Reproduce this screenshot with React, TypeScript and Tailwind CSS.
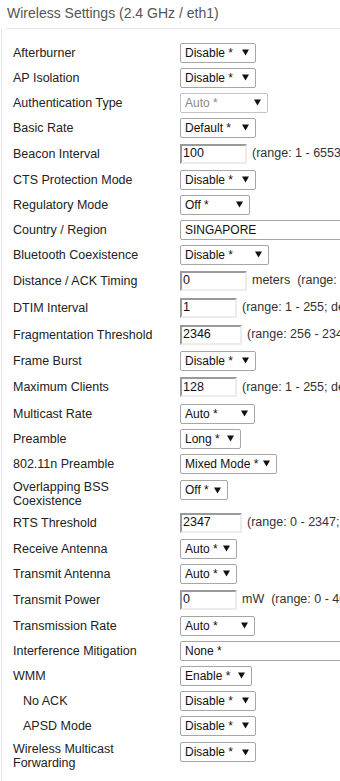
import React from 'react';

type Row = {
  label: string;
  kind: 'select' | 'input';
  value: string;
  w: number;
  after?: string;
  disabled?: boolean;
  indent?: boolean;
  wrap?: boolean;
  h?: string;
};

const rows: Row[] = [
  { label: 'Afterburner', kind: 'select', value: 'Disable *', w: 76 },
  { label: 'AP Isolation', kind: 'select', value: 'Disable *', w: 76 },
  { label: 'Authentication Type', kind: 'select', value: 'Auto *', w: 88, disabled: true },
  { label: 'Basic Rate', kind: 'select', value: 'Default *', w: 76 },
  { label: 'Beacon Interval', kind: 'input', value: '100', w: 67, after: '(range: 1 - 65535; default: 100)' },
  { label: 'CTS Protection Mode', kind: 'select', value: 'Disable *', w: 76 },
  { label: 'Regulatory Mode', kind: 'select', value: 'Off *', w: 70 },
  { label: 'Country / Region', kind: 'select', value: 'SINGAPORE', w: 200 },
  { label: 'Bluetooth Coexistence', kind: 'select', value: 'Disable *', w: 89 },
  { label: 'Distance / ACK Timing', kind: 'input', value: '0', w: 67, after: 'meters\u00a0 (range: 0 - 99999; default: 0)' },
  { label: 'DTIM Interval', kind: 'input', value: '1', w: 57, after: '(range: 1 - 255; default: 1)' },
  { label: 'Fragmentation Threshold', kind: 'input', value: '2346', w: 62, after: '(range: 256 - 2346; default: 2346)' },
  { label: 'Frame Burst', kind: 'select', value: 'Disable *', w: 76 },
  { label: 'Maximum Clients', kind: 'input', value: '128', w: 57, after: '(range: 1 - 255; default: 128)', h: 'h-[28px]' },
  { label: 'Multicast Rate', kind: 'select', value: 'Auto *', w: 75 },
  { label: 'Preamble', kind: 'select', value: 'Long *', w: 61 },
  { label: '802.11n Preamble', kind: 'select', value: 'Mixed Mode *', w: 97 },
  { label: 'Overlapping BSS Coexistence', kind: 'select', value: 'Off *', w: 48, wrap: true },
  { label: 'RTS Threshold', kind: 'input', value: '2347', w: 62, after: '(range: 0 - 2347; default: 2347)' },
  { label: 'Receive Antenna', kind: 'select', value: 'Auto *', w: 57 },
  { label: 'Transmit Antenna', kind: 'select', value: 'Auto *', w: 57 },
  { label: 'Transmit Power', kind: 'input', value: '0', w: 57, after: 'mW\u00a0 (range: 0 - 400; default: 0)' },
  { label: 'Transmission Rate', kind: 'select', value: 'Auto *', w: 75 },
  { label: 'Interference Mitigation', kind: 'select', value: 'None *', w: 200 },
  { label: 'WMM', kind: 'select', value: 'Enable *', w: 72 },
  { label: 'No ACK', kind: 'select', value: 'Disable *', w: 76, indent: true },
  { label: 'APSD Mode', kind: 'select', value: 'Disable *', w: 76, indent: true },
  { label: 'Wireless Multicast Forwarding', kind: 'select', value: 'Disable *', w: 76, wrap: true },
];

const Arrow = () => (
  <svg width="7" height="7" viewBox="0 0 7 7" className="shrink-0">
    <polygon points="0,0.5 7,0.5 3.5,6.5" fill="#111" />
  </svg>
);

const Select = ({ value, w, disabled }: { value: string; w: number; disabled?: boolean }) => (
  <div
    className={`flex h-[20px] shrink-0 items-center justify-between overflow-hidden rounded-[2px] border bg-white pl-[4px] pr-[6px] text-[12px] ${
      disabled ? 'border-[#c4c4c4] text-[#8a8a8a]' : 'border-[#a6a6a6] text-[#111]'
    }`}
    style={{ width: w }}
  >
    <span className="whitespace-nowrap">{value}</span>
    {w < 150 && <Arrow />}
  </div>
);

const Input = ({ value, w }: { value: string; w: number }) => (
  <div
    className="flex h-[20px] shrink-0 items-center border-2 border-t-[#9a9a9a] border-l-[#9a9a9a] border-b-[#ececec] border-r-[#ececec] bg-white pl-[1px] text-[12.5px] text-[#111]"
    style={{ width: w }}
  >
    {value}
  </div>
);

export default function App() {
  return (
    <div className="w-[340px] min-h-[781px] overflow-hidden bg-white font-['Liberation_Sans',Arial,sans-serif]">
      <div className="ml-[6px] border-b border-[#e6e6e6] pb-[6px] pl-[1px] pt-[5px] text-[14px] leading-[17px] text-[#555] whitespace-nowrap">
        Wireless Settings (2.4 GHz / eth1)
      </div>
      <div className="ml-[1px] min-h-[752px] border-l border-[#e6e6e6] pl-[11px] pt-[11px]">
        {rows.map((r) => (
          <div
            key={r.label}
            className={`flex ${r.wrap ? 'h-[33px] items-start pt-[4px]' : 'items-center'} ${
              r.h ? r.h : r.kind === 'input' ? 'h-[27px]' : r.wrap ? '' : 'h-[25px]'
            }`}
          >
            <div
              className={`w-[167px] shrink-0 pr-[14px] text-[12.5px] leading-[14px] text-[#222] ${
                r.indent ? 'pl-[10px]' : ''
              }`}
            >
              {r.label}
            </div>
            {r.kind === 'select' ? (
              <Select value={r.value} w={r.w} disabled={r.disabled} />
            ) : (
              <Input value={r.value} w={r.w} />
            )}
            {r.after && (
              <span className="ml-[5px] whitespace-nowrap text-[12.5px] text-[#333]">{r.after}</span>
            )}
          </div>
        ))}
      </div>
    </div>
  );
}
